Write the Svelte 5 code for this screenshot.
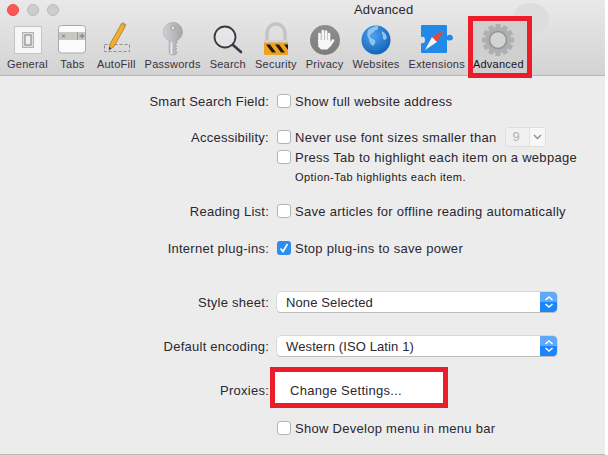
<script>
  const tabs = ["General", "Tabs", "AutoFill", "Passwords", "Search", "Security", "Privacy", "Websites", "Extensions", "Advanced"];
  const teeth = Array.from({ length: 12 }, (_, i) => i * 30);
</script>

<div class="window">
  <header class="toolbar">
    <div class="blob"></div>
    <div class="titlebar">
      <span class="light red"></span>
      <span class="light"></span>
      <span class="light"></span>
      <span class="title">Advanced</span>
    </div>
    <div class="tabs">
      {#each tabs as tab}
        <div class="tab" class:active={tab === "Advanced"}>
          <svg class="icon" width="36" height="36" viewBox="0 0 36 36">
            {#if tab === "General"}
              <rect x="5.5" y="4.5" width="27" height="27" fill="#f7f7f7" stroke="#c4c4c4" />
              <rect x="13.5" y="10.5" width="11" height="15" fill="#dedede" stroke="#b4b4b4" />
              <rect x="16" y="13" width="6" height="10" fill="#f2f2f2" stroke="#7c7c7c" />
            {:else if tab === "Tabs"}
              <rect x="4.5" y="3.5" width="27" height="27.5" rx="3" fill="#fbfbfb" stroke="#a8a8a8" />
              <rect x="5" y="10" width="26" height="8" fill="#c8c7c2" />
              <line x1="23.5" y1="10" x2="23.5" y2="18" stroke="#9b9b9b" />
              <path d="M8 12.5l3 3m0-3l-3 3M25.5 14h5m-2.5-2.5v5" stroke="#777" fill="none" />
            {:else if tab === "AutoFill"}
              <rect x="6.5" y="22.5" width="25" height="7" fill="none" stroke="#8c8c8c" stroke-dasharray="3 2" />
              <path d="M11 28l1-6L23.5 1.5 27.5 4 16 24.5z" fill="#f2ae2e" stroke="#8a6420" stroke-width=".6" />
              <path d="M23.5 1.5l1-1.5 4 2.5-1 1.5z" fill="#b89a82" />
              <path d="M11 28l.4-3 2 1.2z" fill="#333" />
            {:else if tab === "Passwords"}
              <defs>
                <linearGradient id="key" x1="0" y1="0" x2="1" y2="0">
                  <stop offset="0" stop-color="#cfd1d3" />
                  <stop offset="1" stop-color="#a3a5a8" />
                </linearGradient>
              </defs>
              <path d="M14 18.5a9.5 9.5 0 1 1 8 0V21l-1.5 1.5L22 24l-1.5 1.5L22 27l-1.5 1.5L22 30v1l-2 2h-4l-2-2z" fill="url(#key)" stroke="#9a9c9f" stroke-width=".5" />
              <circle cx="18" cy="6" r="2" fill="#e4e4e4" stroke="#8a8a8a" stroke-width=".7" />
              <line x1="16.5" y1="20" x2="16.5" y2="32" stroke="#eee" stroke-width="1.5" />
            {:else if tab === "Search"}
              <circle cx="15" cy="15" r="10.5" fill="#f0f0f0" fill-opacity=".4" stroke="#3b3843" stroke-width="1.8" />
              <line x1="23" y1="23" x2="31" y2="30" stroke="#3b3843" stroke-width="2.6" stroke-linecap="round" />
            {:else if tab === "Security"}
              <path d="M9 19v-8a9 9 0 0 1 18 0v8" fill="none" stroke="#c2c4c7" stroke-width="3.5" />
              <rect x="6" y="18" width="24" height="15" rx="1.5" fill="#f0a21d" />
              <rect x="6" y="18" width="24" height="2.5" fill="#d3d3d3" />
              <path d="M8 22.5h4l6 8h-4zM17 22.5h4l6 8h-4zM26 22.5h4v5.3z" fill="#1f1b16" />
            {:else if tab === "Privacy"}
              <defs>
                <linearGradient id="stop" x1="0" y1="0" x2="0" y2="1">
                  <stop offset="0" stop-color="#8f8f8f" />
                  <stop offset="1" stop-color="#7c7c7c" />
                </linearGradient>
              </defs>
              <circle cx="18" cy="18" r="15" fill="url(#stop)" />
              <g stroke="#f6f6f6" stroke-width="2.7" stroke-linecap="round" fill="none">
                <line x1="12.5" y1="12" x2="12.5" y2="20" />
                <line x1="15.8" y1="9" x2="15.8" y2="20" />
                <line x1="19" y1="9.5" x2="19" y2="20" />
                <line x1="22" y1="12" x2="22" y2="21" />
                <line x1="23" y1="23" x2="26" y2="18.5" />
              </g>
              <path d="M11.2 18h12v6.5l-3 3h-6l-3-3z" fill="#f6f6f6" />
            {:else if tab === "Websites"}
              <defs>
                <radialGradient id="globe" cx=".4" cy=".35" r=".75">
                  <stop offset="0" stop-color="#4aa2ec" />
                  <stop offset="1" stop-color="#0d5cb4" />
                </radialGradient>
              </defs>
              <circle cx="18" cy="18" r="14.5" fill="url(#globe)" />
              <path d="M10 8q5-4 10-4 1 2-1 4-3 0-3 2l-3 2q-2 2 0 4l4 2q1 3-2 6-4-3-4-7-3-4-1-9zM24 9q4 2 5 7l-2 2q-3-1-2-4-2-3-1-5z" fill="#8fc4ee" />
            {:else if tab === "Extensions"}
              <path d="M3 3h24q1 0 1 1v10q4-3 6 1 0 5-6 3v12q0 1-1 1H3q-1 0-1-1V21q4 1 4-3 0-4-4-3V4q0-1 1-1z" fill="#2389e8" />
              <path d="M25 8L13 15l5 5z" fill="#e8483c" />
              <path d="M6 28l7-13 5 5z" fill="#f4f4f4" />
            {:else}
              {#each teeth as deg}
                <rect x="15.5" y="2" width="5" height="6" fill="#aeafb1" transform="rotate({deg} 18 18)" />
              {/each}
              <circle cx="18" cy="18" r="13" fill="#aeafb1" />
              <circle cx="18" cy="18" r="8.5" fill="#d2d3d3" stroke="#919294" stroke-width="1.5" />
            {/if}
          </svg>
          <span>{tab}</span>
        </div>
      {/each}
    </div>
  </header>

  <main class="form">
    <div class="row">
      <span class="label">Smart Search Field:</span>
      <label class="check"><span class="box"></span>Show full website address</label>
    </div>

    <div class="row gap-access">
      <span class="label">Accessibility:</span>
      <label class="check">
        <span class="box"></span>Never use font sizes smaller than
        <span class="size"><span class="size-value">9</span><span class="size-arrow">
          <svg width="9" height="6" viewBox="0 0 9 6"><path d="M1 1l3.5 3.5L8 1" fill="none" stroke="#8b8b8b" stroke-width="1.3" /></svg>
        </span></span>
      </label>
    </div>
    <div class="row">
      <span></span>
      <label class="check"><span class="box"></span>Press Tab to highlight each item on a webpage</label>
    </div>
    <div class="row">
      <span></span>
      <span class="hint">Option-Tab highlights each item.</span>
    </div>

    <div class="row gap-reading">
      <span class="label">Reading List:</span>
      <label class="check"><span class="box"></span>Save articles for offline reading automatically</label>
    </div>

    <div class="row gap-plugins">
      <span class="label">Internet plug-ins:</span>
      <label class="check">
        <span class="box on">
          <svg width="14" height="14" viewBox="0 0 14 14"><path d="M3.5 7.5l2.5 3 4.5-7.5" fill="none" stroke="#fff" stroke-width="1.6" /></svg>
        </span>Stop plug-ins to save power
      </label>
    </div>

    <div class="row gap-style">
      <span class="label">Style sheet:</span>
      <div class="select">
        <span>None Selected</span>
        <span class="stepper">
          <svg width="10" height="14" viewBox="0 0 10 14"><path d="M1.5 5L5 2l3.5 3M1.5 9L5 12l3.5-3" fill="none" stroke="#fff" stroke-width="1.5" /></svg>
        </span>
      </div>
    </div>

    <div class="row gap-select">
      <span class="label">Default encoding:</span>
      <div class="select">
        <span>Western (ISO Latin 1)</span>
        <span class="stepper">
          <svg width="10" height="14" viewBox="0 0 10 14"><path d="M1.5 5L5 2l3.5 3M1.5 9L5 12l3.5-3" fill="none" stroke="#fff" stroke-width="1.5" /></svg>
        </span>
      </div>
    </div>

    <div class="row gap-proxies">
      <span class="label">Proxies:</span>
      <div class="change"><span>Change Settings...</span></div>
    </div>

    <div class="row gap-develop">
      <span></span>
      <label class="check"><span class="box"></span>Show Develop menu in menu bar</label>
    </div>
  </main>
</div>

<style>
  :global(body) {
    background: #fff;
  }
  .window {
    position: relative;
    width: 605px;
    height: 455px;
    background: #ececec;
    border-bottom: 1px solid #b9b9b9;
    box-sizing: border-box;
    overflow: hidden;
    font-family: "Liberation Sans", Arial, sans-serif;
    font-size: 13px;
    color: #2b2730;
  }
  .toolbar {
    position: relative;
    height: 76px;
    box-sizing: border-box;
    background: linear-gradient(#e9e9e9, #d3d3d3);
    border-bottom: 1px solid #b5b5b5;
  }
  .titlebar {
    display: flex;
    align-items: center;
    gap: 8px;
    height: 19px;
    padding-left: 7px;
    position: relative;
  }
  .light {
    width: 12px;
    height: 12px;
    border-radius: 50%;
    background: #cdcdcd;
    border: 0.5px solid #bbb;
    box-sizing: border-box;
  }
  .light.red {
    background: #fc5753;
    border-color: #f04a46;
  }
  .title {
    position: absolute;
    left: 354px;
    top: 2px;
    letter-spacing: 0.2px;
  }
  .tabs {
    display: flex;
    padding-left: 2.5px;
    margin-top: 3px;
  }
  .tab {
    display: flex;
    flex-direction: column;
    align-items: center;
    padding: 0 4.5px;
    font-size: 11px;
    line-height: 13px;
    white-space: nowrap;
    color: #37333c;
  }
  .tab span {
    letter-spacing: 0.25px;
  }
  .icon {
    display: block;
    margin: 0 -2.5px;
  }
  .tab.active {
    position: relative;
    margin-left: -1px;
    color: #14122a;
  }
  .tab.active::before {
    content: "";
    position: absolute;
    left: 0;
    right: -4px;
    top: -6px;
    height: 62px;
    box-sizing: border-box;
    background: #cfcfcf;
    border: 5px solid #ed1c2a;
  }
  .tab.active .icon,
  .tab.active span {
    position: relative;
  }
  .blob {
    position: absolute;
    left: 514px;
    top: 3px;
    width: 35px;
    height: 31px;
    border-radius: 45% 55% 50% 50%;
    background: #dcdddc;
  }
  .form {
    display: flex;
    flex-direction: column;
    padding-top: 15px;
  }
  .row {
    display: grid;
    grid-template-columns: 269px 1fr;
    grid-template-rows: 20px;
    column-gap: 8px;
    align-items: center;
    height: 20px;
  }
  .label {
    text-align: right;
    letter-spacing: 0.25px;
  }
  .check {
    display: flex;
    align-items: center;
    letter-spacing: 0.28px;
    white-space: nowrap;
  }
  .box {
    flex: none;
    width: 14px;
    height: 14px;
    margin-right: 4px;
    box-sizing: border-box;
    background: #fff;
    border: 1px solid #b4b4b4;
    border-radius: 3px;
  }
  .box.on {
    background: #2f8cf0;
    border: 0;
  }
  .box svg {
    display: block;
  }
  .size {
    display: flex;
    width: 41px;
    height: 20px;
    margin-left: 9px;
    box-sizing: border-box;
    border: 1px solid #dedede;
    border-radius: 3px;
    color: #b4b4b4;
    background: #f0f0f0;
  }
  .size-value {
    width: 23px;
    padding-left: 6px;
    line-height: 18px;
    box-sizing: border-box;
  }
  .size-arrow {
    flex: 1;
    display: flex;
    align-items: center;
    justify-content: center;
    background: #f7f7f7;
    border-left: 1px solid #e2e2e2;
  }
  .hint {
    font-size: 11px;
    padding-left: 18px;
    color: #1a1820;
    letter-spacing: 0.43px;
  }
  .select {
    position: relative;
    display: flex;
    align-items: center;
    justify-content: space-between;
    width: 280px;
    height: 20px;
    box-sizing: border-box;
    padding-left: 9px;
    background: #fff;
    border-radius: 4px;
    box-shadow: 0 0 0 0.5px #c4c4c4, 0 1px 0 #b5b5b5;
    letter-spacing: 0.12px;
  }
  .stepper {
    display: flex;
    align-items: center;
    justify-content: center;
    width: 17px;
    height: 20px;
    border-radius: 0 4px 4px 0;
    background: linear-gradient(#5fa8fa, #5fa8fa 50%, #1a86fc 50%);
  }
  .stepper svg {
    display: block;
  }
  .change {
    align-self: start;
    width: 178px;
    height: 41px;
    margin: -13px 0 0 -7px;
    box-sizing: border-box;
    padding-left: 15px;
    background: #fff;
    border: 5px solid #ed1c2a;
    letter-spacing: 0.28px;
  }
  .change span {
    display: block;
    line-height: 38px;
  }
  .gap-access { margin-top: 16px; }
  .gap-reading { margin-top: 14px; }
  .gap-plugins { margin-top: 17px; }
  .gap-style { margin-top: 34px; }
  .gap-select { margin-top: 24px; }
  .gap-proxies { margin-top: 24px; }
  .gap-develop { margin-top: 18px; }
</style>
